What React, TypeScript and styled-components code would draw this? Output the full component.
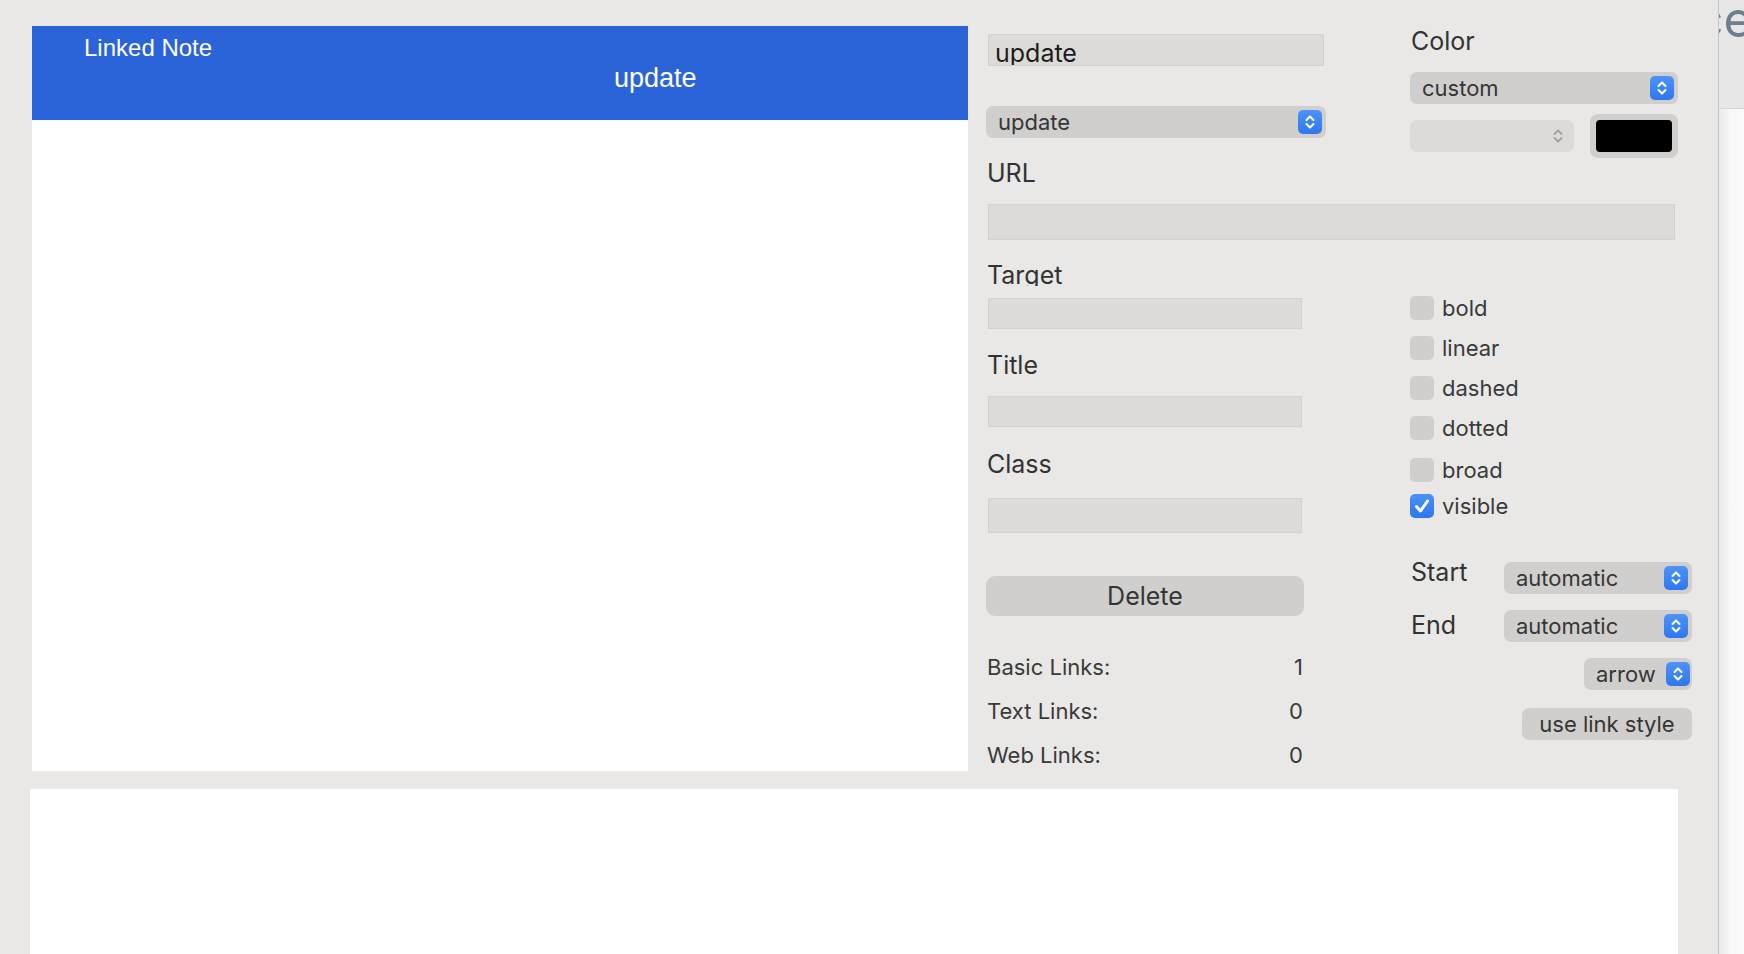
import React from "react";
import styled, { createGlobalStyle } from "styled-components";

const GlobalStyle = createGlobalStyle`
  html, body { margin: 0; padding: 0; background: #e9e8e6; }
  body { font-family: Inter, "Noto Sans", sans-serif; -webkit-font-smoothing: antialiased; }
  * { box-sizing: border-box; }
`;

const Frame = styled.div`
  display: flex;
  width: 1744px;
  height: 954px;
  overflow: hidden;
  background: #e9e8e6;
`;

const Main = styled.div`
  display: flex;
  flex-direction: column;
  width: 1718px;
  flex: none;
`;

const TopRow = styled.div`
  display: flex;
  height: 771px;
  flex: none;
`;

const NoteColumn = styled.div`
  margin: 26px 0 0 32px;
  width: 936px;
  flex: none;
  display: flex;
  flex-direction: column;
  background: #ffffff;
`;

const NoteHeader = styled.div`
  height: 94px;
  flex: none;
  background: #2b63d9;
  color: #ffffff;
  font-family: "Liberation Sans", Arial, sans-serif;
  padding-top: 8px;
`;

const HeaderTitle = styled.div`
  padding-left: 52px;
  font-size: 24px;
  line-height: 28px;
`;

const HeaderSub = styled.div`
  margin-top: 2px;
  padding-left: 582px;
  font-size: 27px;
  line-height: 28px;
`;

const NoteBody = styled.div`
  flex: 1;
`;

const Inspector = styled.div`
  flex: 1;
  padding: 0 26px 0 18px;
  display: flex;
  flex-direction: column;
  color: #353535;
`;

const TopGrid = styled.div`
  display: grid;
  grid-template-columns: 340px 268px;
  column-gap: 84px;
  align-items: start;
`;

const Column = styled.div<{ $pt: number; $w?: number }>`
  display: flex;
  flex-direction: column;
  padding-top: ${(p) => p.$pt}px;
  ${(p) => (p.$w ? `width: ${p.$w}px;` : "")}
`;

const Label = styled.div<{ $mt?: number; $clip?: boolean }>`
  font-size: 25px;
  line-height: 32px;
  color: #333333;
  margin-left: 1px;
  margin-top: ${(p) => p.$mt ?? 0}px;
  height: ${(p) => (p.$clip ? "27px" : "32px")};
  overflow: hidden;
`;

const Field = styled.div<{ $w: number; $h: number; $mt?: number }>`
  width: ${(p) => p.$w}px;
  height: ${(p) => p.$h}px;
  margin-left: 2px;
  margin-top: ${(p) => p.$mt ?? 0}px;
  background: #dcdbd9;
  border: 1px solid #d2d1cf;
  flex: none;
`;

const NameField = styled(Field)`
  padding-left: 6px;
  font-size: 25px;
  line-height: 36px;
  color: #1c1c1c;
  overflow: hidden;
`;

const Popup = styled.div<{ $w: number; $mt?: number; $disabled?: boolean }>`
  width: ${(p) => p.$w}px;
  height: 32px;
  margin-top: ${(p) => p.$mt ?? 0}px;
  flex: none;
  display: flex;
  align-items: center;
  justify-content: space-between;
  padding: 0 4px 0 12px;
  border-radius: 7px;
  background: ${(p) => (p.$disabled ? "#dcdbd9" : "#d0cfcd")};
  font-size: 22px;
  color: #363636;
  white-space: nowrap;
`;

const Stepper = styled.span<{ $disabled?: boolean }>`
  width: 24px;
  height: 24px;
  flex: none;
  display: flex;
  align-items: center;
  justify-content: center;
  border-radius: 5px;
  background: ${(p) =>
    p.$disabled ? "transparent" : "linear-gradient(#4d93f8, #2f77ee)"};
`;

const ColorRow = styled.div`
  display: flex;
  align-items: center;
  gap: 16px;
  margin-top: 10px;
  height: 44px;
`;

const ColorWell = styled.div`
  width: 88px;
  height: 44px;
  padding: 6px;
  border-radius: 8px;
  background: #d0cfcd;
  flex: none;
`;

const Swatch = styled.div`
  width: 100%;
  height: 100%;
  border-radius: 4px;
  background: #000000;
`;

const Lower = styled.div`
  display: flex;
  justify-content: space-between;
`;

const PushButton = styled.div<{ $w: number; $h: number; $mt: number; $size: number }>`
  width: ${(p) => p.$w}px;
  height: ${(p) => p.$h}px;
  margin-top: ${(p) => p.$mt}px;
  flex: none;
  display: flex;
  align-items: center;
  justify-content: center;
  border-radius: ${(p) => (p.$h > 36 ? 9 : 7)}px;
  background: #d0cfcd;
  font-size: ${(p) => p.$size}px;
  color: #353535;
  white-space: nowrap;
`;

const Counts = styled.div`
  display: flex;
  flex-direction: column;
  gap: 14px;
  margin-top: 36px;
`;

const CountRow = styled.div`
  display: flex;
  justify-content: space-between;
  width: 316px;
  margin-left: 1px;
  font-size: 22px;
  line-height: 30px;
  color: #3a3a3a;
`;

const CheckRow = styled.div<{ $mt: number }>`
  display: flex;
  align-items: center;
  gap: 8px;
  height: 24px;
  margin-top: ${(p) => p.$mt}px;
  font-size: 22px;
  line-height: 24px;
  color: #3a3a3a;
`;

const Box = styled.span<{ $on?: boolean }>`
  width: 24px;
  height: 24px;
  flex: none;
  display: flex;
  align-items: center;
  justify-content: center;
  border-radius: 5px;
  background: ${(p) => (p.$on ? "linear-gradient(#4a90f8, #2f77ee)" : "#d0cfcd")};
`;

const EndRow = styled.div<{ $mt: number }>`
  display: flex;
  justify-content: space-between;
  align-items: flex-start;
  height: 32px;
  margin-top: ${(p) => p.$mt}px;
`;

const EndLabel = styled.div<{ $lh: number }>`
  font-size: 25px;
  line-height: ${(p) => p.$lh}px;
  color: #333333;
  margin-left: 1px;
`;

const RightAlign = styled.div<{ $mt: number }>`
  display: flex;
  justify-content: flex-end;
  margin-top: ${(p) => p.$mt}px;
`;

const PopupText = styled.span`
  padding-right: 10px;
`;

const BottomPanel = styled.div`
  margin: 18px 0 0 30px;
  width: 1648px;
  flex: 1;
  background: #ffffff;
`;

const Strip = styled.div`
  width: 26px;
  flex: none;
  display: flex;
  flex-direction: column;
  border-left: 1px solid #c4c4c4;
  overflow: hidden;
`;

const StripTop = styled.div`
  height: 109px;
  flex: none;
  background: #e7e7e7;
  border-bottom: 1px solid #d6d6d6;
  overflow: hidden;
`;

const StripText = styled.div`
  font-size: 50px;
  line-height: 1;
  color: #6e7e8c;
  margin: -6px 0 0 -24px;
  white-space: nowrap;
`;

const StripBody = styled.div`
  flex: 1;
  background: linear-gradient(to right, #e9e9e9, #f8f8f8 12px, #fbfbfb);
`;

const Chevrons = ({ disabled }: { disabled?: boolean }) => (
  <Stepper $disabled={disabled}>
    <svg width="24" height="24" viewBox="0 0 24 24" fill="none">
      <path
        d="M8.5 10 L12 6.5 L15.5 10 M8.5 14 L12 17.5 L15.5 14"
        stroke={disabled ? "#a3a3a3" : "#ffffff"}
        strokeWidth="2"
        strokeLinecap="round"
        strokeLinejoin="round"
      />
    </svg>
  </Stepper>
);

const Check = ({ label, on, mt }: { label: string; on?: boolean; mt: number }) => (
  <CheckRow $mt={mt}>
    <Box $on={on}>
      {on && (
        <svg width="24" height="24" viewBox="0 0 24 24" fill="none">
          <path
            d="M6.5 12.5 L10.5 17 L17.5 7"
            stroke="#ffffff"
            strokeWidth="3"
            strokeLinecap="round"
            strokeLinejoin="round"
          />
        </svg>
      )}
    </Box>
    {label}
  </CheckRow>
);

export default function App() {
  return (
    <>
      <GlobalStyle />
      <Frame>
        <Main>
          <TopRow>
            <NoteColumn>
              <NoteHeader>
                <HeaderTitle>Linked Note</HeaderTitle>
                <HeaderSub>update</HeaderSub>
              </NoteHeader>
              <NoteBody />
            </NoteColumn>
            <Inspector>
              <TopGrid>
                <Column $pt={34}>
                  <NameField $w={336} $h={32}>update</NameField>
                  <Popup $w={340} $mt={40}>
                    <span>update</span>
                    <Chevrons />
                  </Popup>
                  <Label $mt={19}>URL</Label>
                </Column>
                <Column $pt={25}>
                  <Label>Color</Label>
                  <Popup $w={268} $mt={15}>
                    <span>custom</span>
                    <Chevrons />
                  </Popup>
                  <ColorRow>
                    <Popup $w={164} $disabled>
                      <span />
                      <Chevrons disabled />
                    </Popup>
                    <ColorWell>
                      <Swatch />
                    </ColorWell>
                  </ColorRow>
                </Column>
              </TopGrid>
              <Field $w={687} $h={36} $mt={15} />
              <Lower>
                <Column $pt={0} $w={318}>
                  <Label $mt={19} $clip>Target</Label>
                  <Field $w={314} $h={31} $mt={12} />
                  <Label $mt={20}>Title</Label>
                  <Field $w={314} $h={31} $mt={15} />
                  <Label $mt={21}>Class</Label>
                  <Field $w={314} $h={35} $mt={18} />
                  <PushButton $w={318} $h={40} $mt={43} $size={25}>
                    Delete
                  </PushButton>
                  <Counts>
                    <CountRow>
                      <span>Basic Links:</span>
                      <span>1</span>
                    </CountRow>
                    <CountRow>
                      <span>Text Links:</span>
                      <span>0</span>
                    </CountRow>
                    <CountRow>
                      <span>Web Links:</span>
                      <span>0</span>
                    </CountRow>
                  </Counts>
                </Column>
                <Column $pt={56} $w={282}>
                  <Check label="bold" mt={0} />
                  <Check label="linear" mt={16} />
                  <Check label="dashed" mt={16} />
                  <Check label="dotted" mt={16} />
                  <Check label="broad" mt={18} />
                  <Check label="visible" on mt={12} />
                  <EndRow $mt={44}>
                    <EndLabel $lh={20}>Start</EndLabel>
                    <Popup $w={188}>
                      <span>automatic</span>
                      <Chevrons />
                    </Popup>
                  </EndRow>
                  <EndRow $mt={16}>
                    <EndLabel $lh={30}>End</EndLabel>
                    <Popup $w={188}>
                      <span>automatic</span>
                      <Chevrons />
                    </Popup>
                  </EndRow>
                  <RightAlign $mt={16}>
                    <Popup $w={108}>
                      <PopupText>arrow</PopupText>
                      <Chevrons />
                    </Popup>
                  </RightAlign>
                  <RightAlign $mt={18}>
                    <PushButton $w={170} $h={32} $mt={0} $size={22}>
                      use link style
                    </PushButton>
                  </RightAlign>
                </Column>
              </Lower>
            </Inspector>
          </TopRow>
          <BottomPanel />
        </Main>
        <Strip>
          <StripTop>
            <StripText>ce</StripText>
          </StripTop>
          <StripBody />
        </Strip>
      </Frame>
    </>
  );
}
